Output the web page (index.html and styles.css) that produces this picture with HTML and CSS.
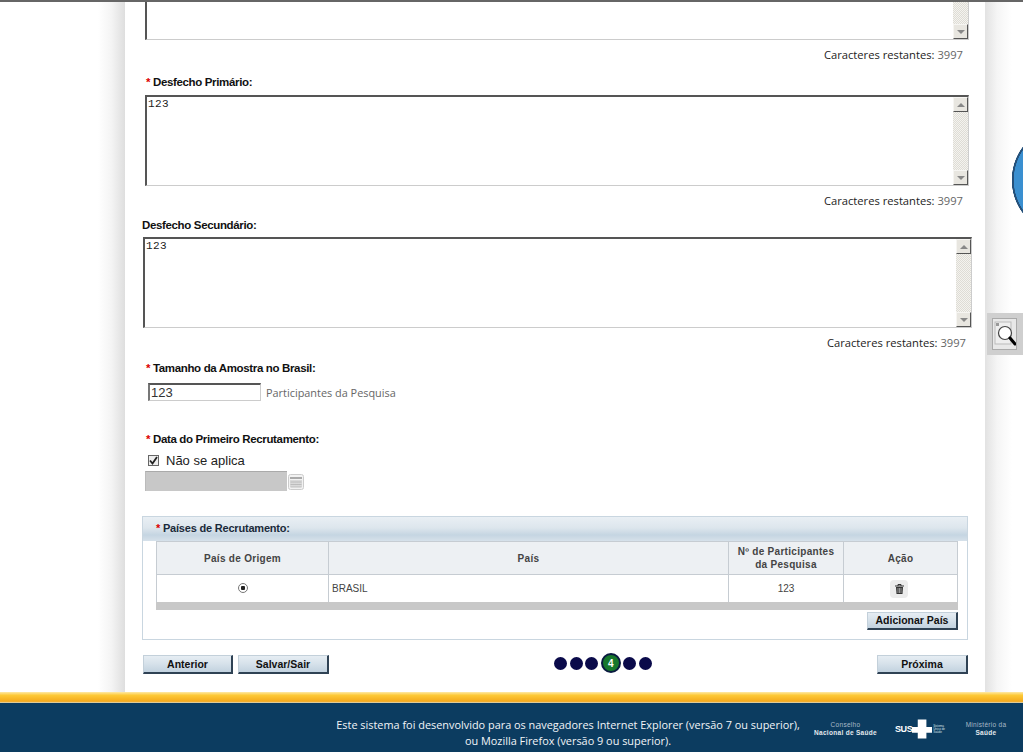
FILE: index.html
```html
<!DOCTYPE html>
<html lang="pt-BR">
<head>
    <meta charset="UTF-8">
    <title>Plataforma Brasil</title>
    <link rel="stylesheet" href="styles.css">
</head>
<body>
    <div class="topline"></div>
    <div class="main">
        <div class="shade-left"></div>
        <div class="sheet">
            <div class="field field-first">
                <div class="textbox">
                    <textarea class="textbox-input"></textarea>
                    <div class="scroll"><span class="scroll-btn up"></span><span class="scroll-btn down"></span></div>
                </div>
                <div class="chars">Caracteres restantes: <span class="chars-num">3997</span></div>
            </div>

            <div class="field field-next">
                <div class="label"><span class="req">*</span> Desfecho Primário:</div>
                <div class="textbox">
                    <textarea class="textbox-input">123</textarea>
                    <div class="scroll"><span class="scroll-btn up"></span><span class="scroll-btn down"></span></div>
                </div>
                <div class="chars">Caracteres restantes: <span class="chars-num">3997</span></div>
            </div>

            <div class="field field-wide">
                <div class="label">Desfecho Secundário:</div>
                <div class="textbox">
                    <textarea class="textbox-input">123</textarea>
                    <div class="scroll"><span class="scroll-btn up"></span><span class="scroll-btn down"></span></div>
                </div>
                <div class="chars">Caracteres restantes: <span class="chars-num">3997</span></div>
            </div>

            <div class="field field-sample">
                <div class="label"><span class="req">*</span> Tamanho da Amostra no Brasil:</div>
                <div class="sample-row">
                    <input class="text-input" type="text" value="123">
                    <span class="hint">Participantes da Pesquisa</span>
                </div>
            </div>

            <div class="field field-date">
                <div class="label"><span class="req">*</span> Data do Primeiro Recrutamento:</div>
                <label class="check-row"><span class="check"><svg width="9" height="9" viewBox="0 0 9 9"><path d="M1 4.500 L3.500 7.500 L8 1" fill="none" stroke="#222" stroke-width="1.800"/></svg></span> Não se aplica</label>
                <div class="date-row">
                    <div class="date-input"></div>
                    <svg class="cal" width="16" height="16" viewBox="0 0 16 16">
                        <rect x=".5" y=".5" width="15" height="15" rx="2" fill="#f2f2f2" stroke="#ccc"/>
                        <rect x="2" y="3" width="12" height="2" fill="#aaa"/>
                        <path d="M3 6v7M5 6v7M7 6v7M9 6v7M11 6v7M13 6v7M2.500 8h11M2.500 10.500h11M2.500 13h11" stroke="#b5b5b5" stroke-width=".8"/>
                    </svg>
                </div>
            </div>

            <div class="panel">
                <div class="panel-head"><span class="req">*</span> Países de Recrutamento:</div>
                <div class="panel-body">
                    <table class="grid">
                        <thead>
                            <tr>
                                <th class="col-origin">País de Origem</th>
                                <th class="col-country">País</th>
                                <th class="col-num">Nº de Participantes da Pesquisa</th>
                                <th class="col-action">Ação</th>
                            </tr>
                        </thead>
                        <tbody>
                            <tr>
                                <td class="center"><span class="radio"></span></td>
                                <td>BRASIL</td>
                                <td class="center">123</td>
                                <td class="center">
                                    <span class="trash">
                                        <svg width="9" height="10" viewBox="0 0 9 10"><path d="M0 2h9M3 2V.500h3V2" fill="none" stroke="#333"/><path d="M1 3h7l-.5 7h-6z" fill="#333"/><path d="M3 4v5M4.500 4v5M6 4v5" stroke="#ddd" stroke-width=".6"/></svg>
                                    </span>
                                </td>
                            </tr>
                        </tbody>
                    </table>
                    <div class="grid-foot"></div>
                    <div class="panel-actions"><button class="btn btn-add">Adicionar País</button></div>
                </div>
            </div>

            <div class="nav">
                <div class="nav-left">
                    <button class="btn">Anterior</button>
                    <button class="btn">Salvar/Sair</button>
                </div>
                <div class="steps">
                    <span class="dot"></span>
                    <span class="dot"></span>
                    <span class="dot"></span>
                    <span class="dot dot-active">4</span>
                    <span class="dot"></span>
                    <span class="dot"></span>
                </div>
                <button class="btn">Próxima</button>
            </div>
        </div>
        <div class="shade-right"></div>
    </div>

    <div class="footer-band"></div>
    <div class="footer">
        <p class="footer-text">Este sistema foi desenvolvido para os navegadores Internet Explorer (versão 7 ou superior),<br>ou Mozilla Firefox (versão 9 ou superior).</p>
        <div class="logo logo-cns">Conselho<br><b>Nacional de Saúde</b></div>
        <div class="logo-sus">
            <b class="sus-name">SUS</b>
            <svg width="21" height="20" viewBox="0 0 21 20"><path d="M0 8h6V0h9v8h6v6h-6v6H6v-6H0z" fill="#fff"/></svg>
            <span class="sus-sub">Sistema<br>Único de<br>Saúde</span>
        </div>
        <div class="logo logo-ms">Ministério da<br><b>Saúde</b></div>
    </div>

    <div class="help-circle"></div>
    <div class="zoom-tool">
        <span class="zoom-btn">
            <svg width="23" height="30" viewBox="0 0 23 30">
                <rect x="2" y="3" width="16" height="22" fill="#eee" stroke="#bbb"/>
                <rect x="3" y="4" width="3" height="3" fill="#999"/>
                <circle cx="12" cy="14" r="6.500" fill="#fff" stroke="#444" stroke-width="1.200"/>
                <path d="M17 19l5 6" stroke="#000" stroke-width="3" stroke-linecap="round"/>
            </svg>
        </span>
    </div>
</body>
</html>
```

FILE: styles.css
```css
* {
    box-sizing: border-box;
}
html, body {
    height: 100%;
}
body {
    margin: 0;
    height: 752px;
    overflow: hidden;
    display: flex;
    flex-direction: column;
    background: white;
    font-family: "Liberation Sans", Arial, sans-serif;
    font-size: 12px;
    color: #111;
}
.topline {
    height: 2px;
    background: #666;
    flex: none;
}
.main {
    flex: 1;
    min-height: 0;
    overflow: hidden;
    display: grid;
    grid-template-columns: 98px 27px 860px 27px 1fr;
    grid-template-areas: ". left sheet right .";
}
.shade-left {
    grid-area: left;
    background: linear-gradient(90deg, #fff 0%, #f4f4f4 50%, #dedede 100%);
}
.shade-right {
    grid-area: right;
    background: linear-gradient(90deg, #e2e2e2 0%, #f5f5f5 45%, #fff 100%);
}
.sheet {
    grid-area: sheet;
    background: white;
    margin-top: -53px;
}

/* campos */
.field {
    margin-left: 20px;
    width: 824px;
}
.field-next {
    margin-top: 11px;
}
.field-next .label {
    margin-left: 1px;
}
.field-wide {
    margin-top: 8px;
    margin-left: 18px;
    width: 829px;
}
.field-wide .label {
    margin-left: -1px;
}
.field-sample {
    margin-top: 9px;
    margin-left: 21px;
}
.field-date {
    margin-top: 30px;
    margin-left: 21px;
}
.label {
    font-weight: bold;
    font-size: 11.5px;
    line-height: 16px;
    letter-spacing: -0.35px;
    margin-bottom: 5px;
}
.field-wide .label {
    margin-bottom: 4px;
}
.field-sample .label {
    margin-bottom: 7px;
}
.field-date .label {
    margin-bottom: 5px;
}
.req {
    color: #d00;
}
.textbox {
    display: flex;
    height: 91px;
    border-top: 2px solid #555;
    border-left: 2px solid #555;
    border-bottom: 1px solid #ccc;
    border-right: 1px solid #ccc;
}
.textbox-input {
    flex: 1;
    border: none;
    outline: none;
    resize: none;
    padding: 1px 1px;
    font-family: "Liberation Mono", monospace;
    font-size: 11px;
    line-height: 13px;
    letter-spacing: 0.4px;
    color: #222;
    background: white;
}
.scroll {
    width: 15px;
    display: flex;
    flex-direction: column;
    justify-content: space-between;
    background: repeating-conic-gradient(#dedcd5 0 25%, #f4f3ef 0 50%) 0 0 / 2px 2px;
}
.scroll-btn {
    height: 15px;
    display: flex;
    align-items: center;
    justify-content: center;
    background: #e8e6e0;
    border: 1px solid;
    border-color: #f6f5f2 #555 #555 #f6f5f2;
}
.scroll-btn::after {
    content: "";
    border-left: 4px solid transparent;
    border-right: 4px solid transparent;
}
.up::after {
    border-bottom: 4px solid #888;
}
.down::after {
    border-top: 4px solid #888;
}
.chars {
    margin-top: 7px;
    padding-right: 6px;
    text-align: right;
    line-height: 16px;
    font-family: "Open Sans", sans-serif;
    font-size: 11.2px;
    color: #222;
}
.chars-num {
    color: #666;
}
.sample-row {
    display: flex;
    align-items: center;
    gap: 5px;
    padding-left: 2px;
}
.text-input {
    width: 113px;
    height: 18px;
    padding: 0 1px;
    border: 1px solid #ccc;
    border-top: 2px solid #555;
    border-left: 2px solid #777;
    outline: none;
    font-family: "Liberation Sans", Arial, sans-serif;
    font-size: 13px;
    color: #333;
}
.hint {
    font-family: "Open Sans", sans-serif;
    font-size: 10.9px;
    color: #666;
}
.check-row {
    display: flex;
    align-items: center;
    gap: 7px;
    height: 16px;
    padding-left: 2px;
    font-size: 13px;
    color: #222;
}
.check {
    width: 11px;
    height: 11px;
    display: flex;
    align-items: center;
    justify-content: center;
    background: #eee;
    border: 1px solid #666;
}
.date-row {
    display: flex;
    align-items: center;
    gap: 1px;
    margin: 3px 0 0 -1px;
}
.date-input {
    width: 142px;
    height: 20px;
    background: #c8c8c8;
    border-top: 1px solid #aaa;
    border-left: 1px solid #bbb;
}
.cal {
    margin-top: 2px;
}

/* paises */
.panel {
    margin: 25px 17px 0 17px;
    height: 124px;
    border: 1px solid #c9d6e0;
    border-top: none;
}
.panel-head {
    height: 25px;
    padding-left: 13px;
    font-weight: bold;
    font-size: 11px;
    line-height: 23px;
    letter-spacing: -0.2px;
    background: linear-gradient(180deg, #e9eff4 0%, #dde6ed 45%, #c5d5e2 75%, #d6e1ea 100%);
    border-top: 1px solid #c9d6e0;
    color: #1a2a3a;
}
.panel-body {
    padding: 0 9px 0 13px;
}
.grid {
    width: 802px;
    border-collapse: collapse;
    table-layout: fixed;
    font-size: 10px;
    color: #444;
}
.grid th, .grid td {
    border: 1px solid #c6ccd2;
    padding: 0 3px;
}
.grid th {
    height: 33px;
    background: #edf0f3;
    font-size: 10px;
    line-height: 13px;
    letter-spacing: 0.3px;
    color: #444;
}
.grid td {
    height: 27px;
    border-bottom: none;
}
.col-origin {
    width: 172px;
}
.col-num {
    width: 115px;
}
.col-action {
    width: 114px;
}
.center {
    text-align: center;
}
.radio {
    display: inline-block;
    width: 10px;
    height: 10px;
    margin-top: 2px;
    border-radius: 50%;
    border: 1px solid #777;
    background: radial-gradient(circle, #222 0 2px, #fff 2.500px);
}
.trash {
    display: inline-flex;
    align-items: center;
    justify-content: center;
    width: 18px;
    height: 18px;
    margin: 1px 3px 0 0;
    background: #ececec;
    border-radius: 4px;
    vertical-align: middle;
}
.grid-foot {
    height: 8px;
    width: 802px;
    background: #c8c8c8;
}
.panel-actions {
    display: flex;
    justify-content: flex-end;
    margin-top: 2px;
}
.btn {
    width: 91px;
    height: 19px;
    padding: 0;
    font-family: "Liberation Sans", Arial, sans-serif;
    font-size: 10.5px;
    font-weight: bold;
    color: #111;
    background: linear-gradient(180deg, #e6edf3 0%, #d6e1ea 50%, #c2d2df 100%);
    border: 1px solid;
    border-color: #c3d0da #2f4254 #2f4254 #c3d0da;
    border-width: 1px 2px 2px 1px;
    cursor: pointer;
}
.btn-add {
    height: 18px;
}

/* rodape do formulario */
.nav {
    display: flex;
    align-items: flex-start;
    justify-content: space-between;
    margin: 15px 17px 0 18px;
}
.nav-left {
    display: flex;
    gap: 5px;
}
.nav-left .btn:first-child {
    width: 90px;
}
.steps {
    display: flex;
    align-items: center;
    gap: 2.5px;
    margin-top: -2px;
}
.dot {
    width: 13px;
    height: 13px;
    border-radius: 50%;
    background: #0a0a4a;
}
.dot-active {
    width: 20px;
    height: 20px;
    display: flex;
    align-items: center;
    justify-content: center;
    background: #17782c;
    border: 2px solid #0a1a40;
    color: white;
    font-size: 10px;
    font-weight: bold;
}

.footer-band {
    flex: none;
    height: 11px;
    background: linear-gradient(180deg, #ffe9a6 0%, #fdc935 30%, #f4a91c 85%, #d9d9c8 100%);
}
.footer {
    flex: none;
    height: 49px;
    display: flex;
    align-items: flex-start;
    background: #0c3c60;
    color: white;
    padding-left: 336px;
}
.footer-text {
    margin: 14px 0 0 0;
    width: 464px;
    text-align: center;
    font-family: "Open Sans", sans-serif;
    font-size: 10.9px;
    line-height: 16px;
    white-space: nowrap;
    color: #f2f5f8;
}
.logo {
    margin-top: 18px;
    text-align: center;
    font-family: "Liberation Sans", Arial, sans-serif;
    font-size: 6.5px;
    line-height: 8px;
    letter-spacing: 0.3px;
    color: #a9bac8;
}
.logo b {
    color: #e3e9ee;
}
.logo-cns {
    width: 63px;
    margin-left: 14px;
    white-space: nowrap;
}
.logo-sus {
    width: 50px;
    margin: 16px 0 0 18px;
    display: flex;
    align-items: center;
}
.sus-name {
    width: 17px;
    font-size: 9px;
    letter-spacing: -0.4px;
}
.sus-sub {
    margin-left: 1px;
    font-size: 3px;
    line-height: 3px;
    white-space: nowrap;
    color: #d8e0e6;
}
.logo-ms {
    width: 44px;
    margin-left: 19px;
    white-space: nowrap;
}

/* sobrepostos na lateral */
.help-circle {
    position: absolute;
    left: 1012px;
    top: 147px;
    width: 11px;
    height: 66px;
    background: radial-gradient(circle 55px at 55px 33px, #3a8fd0 53px, #24507a 53.5px, #24507a 55px, transparent 55.5px);
}
.zoom-tool {
    position: absolute;
    left: 987px;
    top: 313px;
    width: 36px;
    height: 42px;
    background: #cfcfcf;
    display: flex;
    align-items: center;
    padding-left: 5px;
}
.zoom-btn {
    display: flex;
    align-items: center;
    justify-content: center;
    width: 25px;
    height: 32px;
    background: #e8e8e8;
    border: 1px solid #aaa;
}
```
